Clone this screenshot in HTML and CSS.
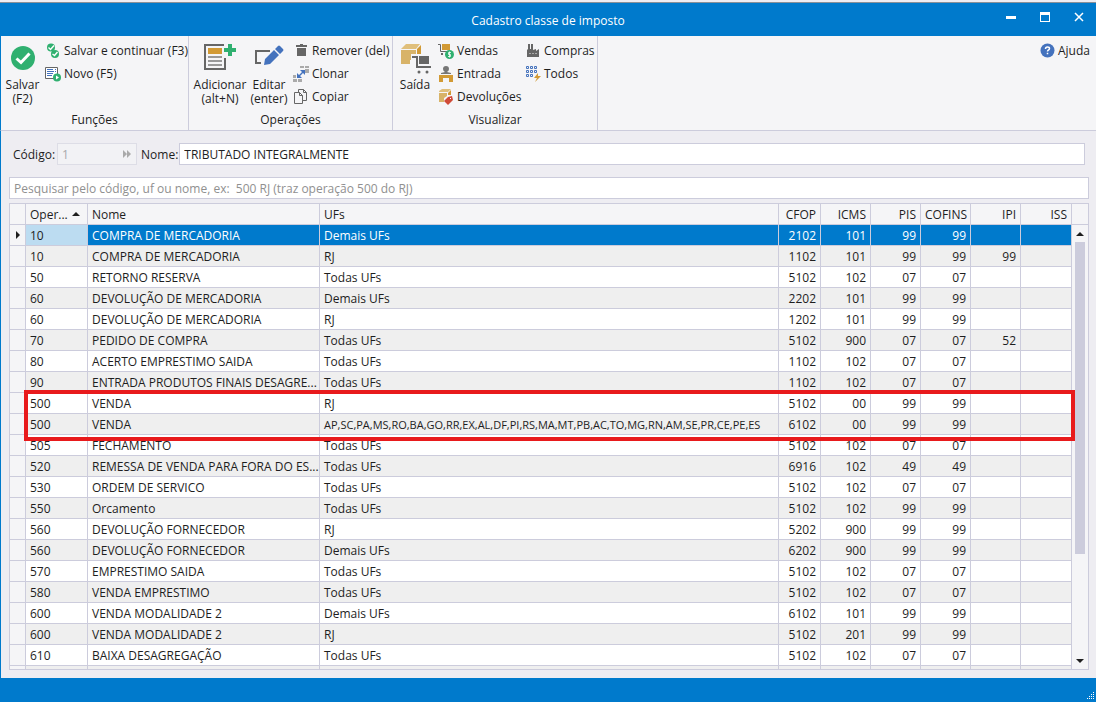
FILE: index.html
```html
<!DOCTYPE html>
<html lang="pt-BR">
<head>
<meta charset="utf-8">
<title>Cadastro classe de imposto</title>
<link rel="stylesheet" href="styles.css">
</head>
<body>
<div class="window">
  <header class="titlebar">
    <h1 class="title">Cadastro classe de imposto</h1>
    <div class="window-buttons">
      <button type="button" class="window-button" aria-label="Minimizar"><svg width="12" height="12" viewBox="0 0 12 12"><path d="M1 5h10v3H1z" fill="#fff"/></svg></button>
      <button type="button" class="window-button" aria-label="Maximizar"><svg width="12" height="12" viewBox="0 0 12 12"><path d="M1 1h10v10H1zM2 4v6h8V4z" fill="#fff" fill-rule="evenodd"/></svg></button>
      <button type="button" class="window-button" aria-label="Fechar"><svg width="12" height="12" viewBox="0 0 12 12"><path d="M2 2l8 8M10 2l-8 8" stroke="#fff" stroke-width="1.5"/></svg></button>
    </div>
  </header>

  <nav class="ribbon">
    <section class="group group-functions">
      <div class="tools">
        <button type="button" class="tool-large">
          <svg class="icon-large" width="32" height="32" viewBox="0 0 32 32"><circle cx="16" cy="16" r="12" fill="#30b070"/><path d="M9.500 16.500l4.500 4 8.500-9" fill="none" stroke="#fff" stroke-width="3"/></svg>
          <span>Salvar<br>(F2)</span>
        </button>
        <div class="tool-list">
          <button type="button" class="tool"><svg width="16" height="16" viewBox="0 0 16 16"><g fill="#30b070"><circle cx="6" cy="4.500" r="4"/><circle cx="10" cy="11" r="4"/></g><path d="M3.500 4.500l2 2 3.500-4M7.500 11l2 1.500 3-3.500" fill="none" stroke="#fff" stroke-width="1.400"/></svg><span>Salvar e continuar (F3)</span></button>
          <button type="button" class="tool"><svg width="16" height="16" viewBox="0 0 16 16"><path d="M.5 1.500h12v11H.5z" fill="#fff" stroke="#666"/><path d="M2 3.500h6M2 5.500h7M2 7.500h6M2 9.500h5M10 3.500h1M10 5.500h1" stroke="#4472bd"/><circle cx="12" cy="11.500" r="4" fill="#30b070"/><path d="M11 9.500l3 2-3 2z" fill="#fff"/></svg><span>Novo (F5)</span></button>
        </div>
      </div>
      <h2 class="group-title">Funções</h2>
    </section>

    <section class="group group-operations">
      <div class="tools">
        <button type="button" class="tool-large tool-add">
          <svg class="icon-large" width="32" height="32" viewBox="0 0 32 32"><path d="M20 2H0v26h22V16h-2v10H2V4h18z" fill="#666"/><path d="M4 6h14v6H4z" fill="#d29a35"/><path d="M4 14h14v2H4zM4 18h14v2H4zM4 22h14v2H4z" fill="#999"/><path d="M24 2h4v4h4v4h-4v4h-4v-4h-4V6h4z" fill="#30b070"/></svg>
          <span>Adicionar<br>(alt+N)</span>
        </button>
        <button type="button" class="tool-large tool-edit">
          <svg class="icon-large" width="32" height="32" viewBox="0 0 32 32"><path d="M17 9H3v12h5" fill="none" stroke="#666" stroke-width="2"/><path d="M12 17l9-9 5 5-9 9-6 1zM22 7l3-3q1-1 2 0l3 3q1 1 0 2l-3 3z" fill="#4472bd"/></svg>
          <span>Editar<br>(enter)</span>
        </button>
        <div class="tool-list">
          <button type="button" class="tool"><svg width="16" height="16" viewBox="0 0 16 16"><path d="M3 2h4V1h3v1h4v2H3zM4 5h9v8H4z" fill="#666"/></svg><span>Remover (del)</span></button>
          <button type="button" class="tool"><svg width="16" height="16" viewBox="0 0 16 16"><path d="M7 0h4v2H7zM12 0h4v2h-4zM12 3h4v4h-4zM0 9h3v3H0zM0 13h4v3H0zM5 13h4v3H5z" fill="#aaa"/><path d="M7 4h5v5l-2-2-3 3 2 2H4V7l2 2 3-3z" fill="#4472bd"/></svg><span>Clonar</span></button>
          <button type="button" class="tool"><svg width="16" height="16" viewBox="0 0 16 16"><path d="M1.500 3.500h5l3 3v8h-8z" fill="#f5f5f7" stroke="#666"/><path d="M5.500.5h5l3 3v8h-4v-5l-3-3h-1zM10.500.5v3h3M6.500 3.500v3h3" fill="#f5f5f7" stroke="#666"/></svg><span>Copiar</span></button>
        </div>
      </div>
      <h2 class="group-title">Operações</h2>
    </section>

    <section class="group group-view">
      <div class="tools">
        <button type="button" class="tool-large">
          <svg class="icon-large" width="32" height="32" viewBox="0 0 32 32"><path d="M2 8h15v4h-5v6h-1v4H2z" fill="#d8b368"/><path d="M7 2h14l-4 5H2z" fill="#e0bf7b"/><path d="M18 7l4-4v9h-4z" fill="#d29a35"/><path d="M13 15h5v10h14" fill="none" stroke="#666" stroke-width="2"/><path d="M20 14h10v8H20z" fill="#666"/><g fill="#666"><circle cx="20" cy="30" r="1.500"/><circle cx="28" cy="30" r="1.500"/></g></svg>
          <span>Saída</span>
        </button>
        <div class="tool-list sales-list">
          <button type="button" class="tool"><svg width="16" height="16" viewBox="0 0 16 16"><path d="M0 1.500h2.500v7H9" fill="none" stroke="#666"/><path d="M4 1h8v6H4z" fill="#d29a35"/><path d="M3 10h2v2H3z" fill="#666"/><circle cx="11.500" cy="11.500" r="4.500" fill="#30b070"/><path d="M13 9.500h-2.500v2h2v2H10M11.500 8.500v6" fill="none" stroke="#fff" stroke-width=".8"/></svg><span>Vendas</span></button>
          <button type="button" class="tool"><svg width="16" height="16" viewBox="0 0 16 16"><path d="M5 3q0-3 3-3t3 3q0 2-2 3l4 1v1H3V7l4-1Q5 5 5 3z" fill="#777"/><path d="M1 9h14v7h-4v-4H5v4H1z" fill="#d29a35"/></svg><span>Entrada</span></button>
          <button type="button" class="tool"><svg width="16" height="16" viewBox="0 0 16 16"><path d="M1 2l3-2h9l-3 3H1z" fill="#e0bf7b"/><path d="M1 4h8v3l-3 2v4H1z" fill="#d8b368"/><path d="M10 4l3-3v5h-3z" fill="#d29a35"/><path d="M10 8l4-1 1 4-5 5-4-4z" fill="#d04a38"/><path d="M12 9h1v1h-1z" fill="#fff"/></svg><span>Devoluções</span></button>
        </div>
        <div class="tool-list">
          <button type="button" class="tool"><svg width="16" height="16" viewBox="0 0 16 16"><path d="M2 14V7l1-1V1h2v5h1V1h2v6l3-1v2l3-2v8z" fill="#666"/><path d="M4 10h2v1H4zM7 10h2v1H7zM10 10h2v1h-2z" fill="#aaa"/></svg><span>Compras</span></button>
          <button type="button" class="tool"><svg width="16" height="16" viewBox="0 0 16 16"><path d="M1.500.5h2v2h-2zM5.500.5h2v2h-2zM9.500.5h2v2h-2zM1.500 4.500h2v2h-2zM5.500 4.500h2v2h-2zM9.500 4.500h2v2h-2zM1.500 8.500h2v2h-2zM5.500 8.500h2v2h-2z" fill="none" stroke="#4472bd"/><path d="M13 7l-4 5h3l-2 4 6-6h-3z" fill="#d29a35"/></svg><span>Todos</span></button>
        </div>
      </div>
      <h2 class="group-title">Visualizar</h2>
    </section>

    <button type="button" class="tool help"><svg width="16" height="16" viewBox="0 0 16 16"><circle cx="8.500" cy="7.500" r="7" fill="#4472bd"/><path d="M6.500 6q0-2 2-2t2 1.500q0 1-1 1.500t-1 1.500M8.500 9.700v1.600" fill="none" stroke="#fff" stroke-width="1.500"/></svg><span>Ajuda</span></button>
  </nav>

  <main class="content">
    <form class="form-row">
      <label for="code">Código:</label>
      <div class="code-box">
        <input id="code" class="code-input" type="text" value="1" disabled>
        <svg width="10" height="8" viewBox="0 0 10 8"><path d="M1 0l4 4-4 4zM5 0l4 4-4 4z" fill="#aaa"/></svg>
      </div>
      <label class="name-label" for="name">Nome:</label>
      <input id="name" class="field name-input" type="text" value="TRIBUTADO INTEGRALMENTE">
    </form>
    <input class="field search" type="text" aria-label="Pesquisar" placeholder="Pesquisar pelo código, uf ou nome, ex:  500 RJ (traz operação 500 do RJ)">

    <div class="grid">
      <div class="grid-body">
        <table class="table">
          <colgroup><col class="col-marker"><col class="col-oper"><col class="col-name"><col><col class="col-cfop"><col class="col-tax"><col class="col-tax"><col class="col-tax"><col class="col-tax"><col class="col-iss"></colgroup>
          <thead>
            <tr><th></th><th>Oper...<svg class="sort" width="8" height="4" viewBox="0 0 8 4"><path d="M0 4l4-4 4 4z" fill="#1e1e1e"/></svg></th><th>Nome</th><th>UFs</th><th class="num">CFOP</th><th class="num">ICMS</th><th class="num">PIS</th><th class="num">COFINS</th><th class="num">IPI</th><th class="num">ISS</th></tr>
          </thead>
          <tbody>
            <tr class="selected"><td class="marker"><svg width="4" height="8" viewBox="0 0 4 8"><path d="M0 0l4 4-4 4z" fill="#1e1e1e"/></svg></td><td class="focused">10</td><td>COMPRA DE MERCADORIA</td><td>Demais UFs</td><td class="num">2102</td><td class="num">101</td><td class="num">99</td><td class="num">99</td><td></td><td></td></tr>
            <tr><td class="marker"></td><td>10</td><td>COMPRA DE MERCADORIA</td><td>RJ</td><td class="num">1102</td><td class="num">101</td><td class="num">99</td><td class="num">99</td><td class="num">99</td><td></td></tr>
            <tr><td class="marker"></td><td>50</td><td>RETORNO RESERVA</td><td>Todas UFs</td><td class="num">5102</td><td class="num">102</td><td class="num">07</td><td class="num">07</td><td></td><td></td></tr>
            <tr><td class="marker"></td><td>60</td><td>DEVOLUÇÃO DE MERCADORIA</td><td>Demais UFs</td><td class="num">2202</td><td class="num">101</td><td class="num">99</td><td class="num">99</td><td></td><td></td></tr>
            <tr><td class="marker"></td><td>60</td><td>DEVOLUÇÃO DE MERCADORIA</td><td>RJ</td><td class="num">1202</td><td class="num">101</td><td class="num">99</td><td class="num">99</td><td></td><td></td></tr>
            <tr><td class="marker"></td><td>70</td><td>PEDIDO DE COMPRA</td><td>Todas UFs</td><td class="num">5102</td><td class="num">900</td><td class="num">07</td><td class="num">07</td><td class="num">52</td><td></td></tr>
            <tr><td class="marker"></td><td>80</td><td>ACERTO EMPRESTIMO SAIDA</td><td>Todas UFs</td><td class="num">1102</td><td class="num">102</td><td class="num">07</td><td class="num">07</td><td></td><td></td></tr>
            <tr><td class="marker"></td><td>90</td><td>ENTRADA PRODUTOS FINAIS DESAGRE...</td><td>Todas UFs</td><td class="num">1102</td><td class="num">102</td><td class="num">07</td><td class="num">07</td><td></td><td></td></tr>
            <tr><td class="marker"></td><td>500</td><td>VENDA</td><td>RJ</td><td class="num">5102</td><td class="num">00</td><td class="num">99</td><td class="num">99</td><td></td><td></td></tr>
            <tr><td class="marker"></td><td>500</td><td>VENDA</td><td class="long-list">AP,SC,PA,MS,RO,BA,GO,RR,EX,AL,DF,PI,RS,MA,MT,PB,AC,TO,MG,RN,AM,SE,PR,CE,PE,ES</td><td class="num">6102</td><td class="num">00</td><td class="num">99</td><td class="num">99</td><td></td><td></td></tr>
            <tr><td class="marker"></td><td>505</td><td>FECHAMENTO</td><td>Todas UFs</td><td class="num">5102</td><td class="num">102</td><td class="num">07</td><td class="num">07</td><td></td><td></td></tr>
            <tr><td class="marker"></td><td>520</td><td>REMESSA DE VENDA PARA FORA DO ES...</td><td>Todas UFs</td><td class="num">6916</td><td class="num">102</td><td class="num">49</td><td class="num">49</td><td></td><td></td></tr>
            <tr><td class="marker"></td><td>530</td><td>ORDEM DE SERVICO</td><td>Todas UFs</td><td class="num">5102</td><td class="num">102</td><td class="num">07</td><td class="num">07</td><td></td><td></td></tr>
            <tr><td class="marker"></td><td>550</td><td>Orcamento</td><td>Todas UFs</td><td class="num">5102</td><td class="num">102</td><td class="num">99</td><td class="num">99</td><td></td><td></td></tr>
            <tr><td class="marker"></td><td>560</td><td>DEVOLUÇÃO FORNECEDOR</td><td>RJ</td><td class="num">5202</td><td class="num">900</td><td class="num">99</td><td class="num">99</td><td></td><td></td></tr>
            <tr><td class="marker"></td><td>560</td><td>DEVOLUÇÃO FORNECEDOR</td><td>Demais UFs</td><td class="num">6202</td><td class="num">900</td><td class="num">99</td><td class="num">99</td><td></td><td></td></tr>
            <tr><td class="marker"></td><td>570</td><td>EMPRESTIMO SAIDA</td><td>Todas UFs</td><td class="num">5102</td><td class="num">102</td><td class="num">07</td><td class="num">07</td><td></td><td></td></tr>
            <tr><td class="marker"></td><td>580</td><td>VENDA EMPRESTIMO</td><td>Todas UFs</td><td class="num">5102</td><td class="num">102</td><td class="num">07</td><td class="num">07</td><td></td><td></td></tr>
            <tr><td class="marker"></td><td>600</td><td>VENDA MODALIDADE 2</td><td>Demais UFs</td><td class="num">6102</td><td class="num">101</td><td class="num">99</td><td class="num">99</td><td></td><td></td></tr>
            <tr><td class="marker"></td><td>600</td><td>VENDA MODALIDADE 2</td><td>RJ</td><td class="num">5102</td><td class="num">201</td><td class="num">99</td><td class="num">99</td><td></td><td></td></tr>
            <tr><td class="marker"></td><td>610</td><td>BAIXA DESAGREGAÇÃO</td><td>Todas UFs</td><td class="num">5102</td><td class="num">102</td><td class="num">07</td><td class="num">07</td><td></td><td></td></tr>
            <tr><td class="marker"></td><td></td><td></td><td></td><td></td><td></td><td></td><td></td><td></td><td></td></tr>
          </tbody>
        </table>
      </div>
      <div class="scroll">
        <div class="scroll-head"></div>
        <button type="button" class="scroll-button" aria-label="Rolar para cima"><svg width="8" height="4" viewBox="0 0 8 4"><path d="M0 4l4-4 4 4z" fill="#1e1e1e"/></svg></button>
        <div class="scroll-track"><div class="scroll-thumb"></div></div>
        <button type="button" class="scroll-button" aria-label="Rolar para baixo"><svg width="8" height="4" viewBox="0 0 8 4"><path d="M0 0l4 4 4-4z" fill="#1e1e1e"/></svg></button>
      </div>
      <div class="highlight"></div>
    </div>
  </main>

  <footer class="statusbar">
    <svg width="8" height="8" viewBox="0 0 8 8"><path d="M6 0h1v1H6zM4 2h1v1H4zM6 2h1v1H6zM2 4h1v1H2zM4 4h1v1H4zM6 4h1v1H6zM0 6h1v1H0zM2 6h1v1H2zM4 6h1v1H4zM6 6h1v1H6z" fill="#fff"/></svg>
  </footer>
</div>
</body>
</html>
```
FILE: styles.css
```css
* { box-sizing: border-box; }

body {
  margin: 0;
  color: #1e1e1e;
  font: 12px/14px "Segoe UI", "Open Sans", "Noto Sans", sans-serif;
}

button, input { font: inherit; color: inherit; }
button { padding: 0; border: 0; background: none; }
svg { display: block; flex: none; }
h1, h2 { margin: 0; font: inherit; }

.window {
  display: flex;
  flex-direction: column;
  height: 100vh;
  border-top: 2px solid #eeedf2;
  background: #eeedf2;
}

.titlebar {
  display: grid;
  grid-template-columns: 1fr auto 1fr;
  align-items: center;
  height: 34px;
  border-top: 1px solid #8a9098;
  background: #007acc;
  color: #fff;
}
.title { grid-column: 2; padding-top: 2px; }
.window-buttons { display: flex; justify-content: flex-end; padding: 0 0 5px; }
.window-button { display: flex; justify-content: center; width: 34px; }

.ribbon {
  display: flex;
  height: 95px;
  border-left: 1px solid #007acc;
  border-bottom: 1px solid #ccccdc;
  background: #f5f5f7;
}
.group {
  display: flex;
  flex-direction: column;
  justify-content: space-between;
  padding: 3px 0;
  border-right: 1px solid #ccccdc;
}
.group-functions { width: 188px; }
.group-operations { width: 204px; }
.group-view { width: 205px; }
.group-title { text-align: center; }
.tools { display: flex; }
.tool-large {
  display: flex;
  flex-direction: column;
  align-items: center;
  width: 44px;
  padding-top: 3px;
  gap: 4px;
  white-space: nowrap;
}
.tool-add { width: 62px; }
.tool-edit { width: 36px; }
.tool-list { display: flex; flex-direction: column; padding-left: 1px; }
.group-operations .tool-list { padding-left: 6px; }
.sales-list { width: 87px; }
.tool {
  display: flex;
  align-items: center;
  gap: 3px;
  height: 23px;
  white-space: nowrap;
}
.help { margin: 3px 6px 0 auto; }

.content {
  display: flex;
  flex: 1;
  flex-direction: column;
  min-height: 0;
  padding: 12px 7px 8px 8px;
  border-left: 1px solid #007acc;
}
.form-row { display: flex; align-items: center; margin: 0 4px 12px; }
.form-row label { padding-top: 2px; }
.code-box {
  display: flex;
  align-items: center;
  width: 80px;
  height: 22px;
  margin-left: 2px;
  padding: 0 4px;
  border: 1px solid #dddde6;
  background: #f2f2f5;
}
.code-input {
  flex: 1;
  min-width: 0;
  padding: 2px 0 0;
  border: 0;
  background: none;
  color: #a8a8ac;
}
.name-label { margin-left: 4px; }
.field {
  height: 22px;
  padding: 0 4px;
  border: 1px solid #ccccdc;
  background: #fff;
}
.name-input { flex: 1; min-width: 0; margin-left: 1px; }
.search { width: 100%; margin-bottom: 4px; }
.search::placeholder { color: #909090; opacity: 1; white-space: pre; }

.grid {
  position: relative;
  display: flex;
  flex: 1;
  min-height: 0;
  border: 1px solid #ccccdc;
}
.grid-body { flex: 1; min-width: 0; overflow: hidden; }
.table {
  width: 100%;
  table-layout: fixed;
  border-collapse: separate;
  border-spacing: 0;
}
.col-marker { width: 16px; }
.col-oper { width: 62px; }
.col-name { width: 232px; }
.col-cfop { width: 42px; }
.col-tax { width: 50px; }
.col-iss { width: 51px; }
.table th, .table td {
  height: 21px;
  padding: 2px 4px 0;
  border-right: 1px solid #ccccdc;
  border-bottom: 1px solid #ccccdc;
  background: #fff;
  font-weight: normal;
  text-align: left;
  white-space: nowrap;
}
.table th { background: #f5f5f7; }
.table tbody tr:nth-child(even) td { background: #efefef; }
.table tbody tr .marker.marker { padding: 0 6px; background: #f5f5f7; }
.table .num { text-align: right; }
.table .long-list { font-size: 11px; }
.table .selected td { background: #007acc; color: #fff; }
.table .selected .focused { background: #bcdcf1; color: #1e1e1e; }
.sort { display: inline-block; margin: 0 0 3px 4px; }

.scroll {
  display: flex;
  flex-direction: column;
  width: 16px;
  background: #f5f5f7;
}
.scroll-head { height: 21px; border-bottom: 1px solid #ccccdc; }
.scroll-button {
  display: flex;
  align-items: center;
  justify-content: center;
  height: 17px;
}
.scroll-track { flex: 1; padding: 0 3px; }
.scroll-thumb { height: 76%; background: #ccccdc; }

.highlight {
  position: absolute;
  top: 186px;
  right: 13px;
  left: 14px;
  height: 51px;
  border: 4px solid #e81a1c;
  pointer-events: none;
}

.statusbar {
  display: flex;
  align-items: flex-end;
  justify-content: flex-end;
  height: 24px;
  padding: 2px 1px;
  background: #007acc;
}
```
